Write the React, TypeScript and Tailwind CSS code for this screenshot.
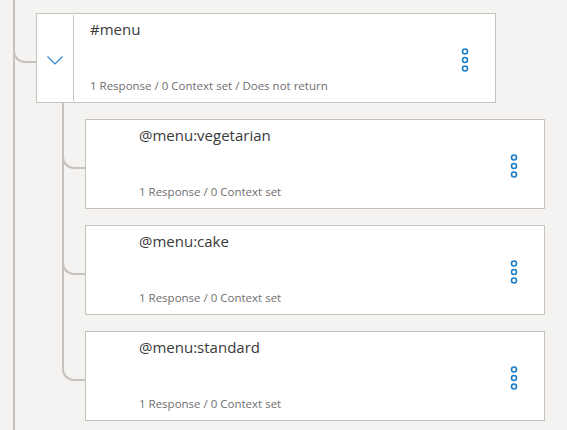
import type { FC } from 'react';

const LINE = 'border-[#c6c3bd]';

const Kebab: FC = () => (
  <svg width="8" height="24" viewBox="0 0 8 24" fill="none">
    <circle cx="4" cy="3.5" r="2.5" stroke="#1b7dc6" strokeWidth="1.6" />
    <circle cx="4" cy="12" r="2.5" stroke="#1b7dc6" strokeWidth="1.6" />
    <circle cx="4" cy="20.5" r="2.5" stroke="#1b7dc6" strokeWidth="1.6" />
  </svg>
);

const Chevron: FC = () => (
  <svg width="16" height="9" viewBox="0 0 16 9" fill="none">
    <path d="M0.5 0.5 L8 8 L15.5 0.5" stroke="#2a8ad8" strokeWidth="1.2" />
  </svg>
);

interface NodeCardProps {
  title: string;
  meta: string;
  expandable?: boolean;
}

const NodeCard: FC<NodeCardProps> = ({ title, meta, expandable = false }) => (
  <div className="flex h-[90px] w-[460px] shrink-0 border border-[#c6c3bd] bg-white">
    <div className="flex w-[36px] items-center justify-center pt-[5px]">
      {expandable && <Chevron />}
    </div>
    <div className={`my-[1px] w-px ${expandable ? 'bg-[#c6c3bd]' : 'bg-transparent'}`} />
    <div className="flex flex-1 flex-col justify-between pb-[8px] pl-[16px] pt-[5px]">
      <div className="text-[15px] leading-[20px] text-[#3a3a3a]">{title}</div>
      <div className="text-[11.5px] leading-[16px] text-[#6f6f6f]">{meta}</div>
    </div>
    <div className="flex items-center pr-[26px] pt-[4px]">
      <Kebab />
    </div>
  </div>
);

const Connector: FC = () => (
  <div className={`-ml-[2px] h-[50px] w-[23px] shrink-0 rounded-bl-[12px] border-b-2 border-l-2 ${LINE}`} />
);

const children = ['@menu:vegetarian', '@menu:cake', '@menu:standard'];

export default function App() {
  return (
    <div className="h-[430px] w-[567px] overflow-hidden bg-[#f4f3f1] font-['Open_Sans','Liberation_Sans',sans-serif]">
      <div className={`ml-[13px] h-full border-l-2 pt-[13px] ${LINE}`}>
        <div className="flex items-start">
          <Connector />
          <NodeCard
            title="#menu"
            meta="1 Response / 0 Context set / Does not return"
            expandable
          />
        </div>
        <div className="ml-[47px] flex items-start">
          <div className="h-[228px] w-[2px] shrink-0 bg-[#c6c3bd]" />
          <div className="flex flex-col gap-[16px] pt-[16px]">
            {children.map((c) => (
              <div key={c} className="flex items-start">
                <Connector />
                <NodeCard title={c} meta="1 Response / 0 Context set" />
              </div>
            ))}
          </div>
        </div>
      </div>
    </div>
  );
}
